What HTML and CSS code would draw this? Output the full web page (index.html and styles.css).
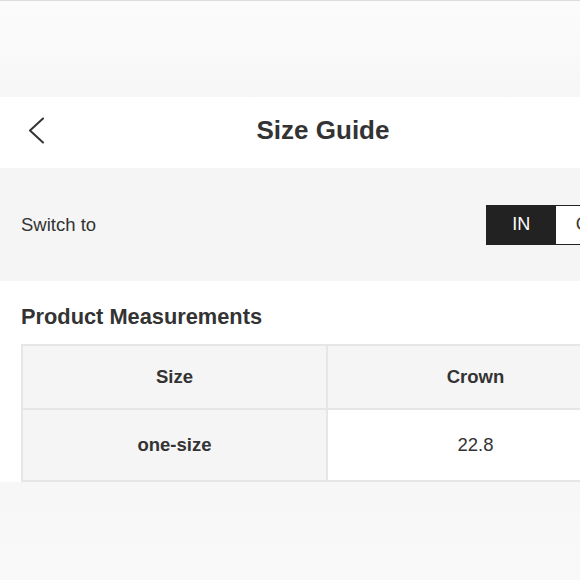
FILE: index.html
```html
<!DOCTYPE html>
<html lang="en">
<head>
<meta charset="utf-8">
<title>Size Guide</title>
<link rel="stylesheet" href="styles.css">
</head>
<body>
<div class="page">
  <div class="topbar"></div>
  <header class="nav">
    <button class="back" aria-label="Back">
      <svg width="16" height="28" viewBox="0 0 16 28"><polyline points="15,1.5 2,13.5 15,25.5" fill="none" stroke="#333" stroke-width="2" stroke-linecap="round" stroke-linejoin="round"/></svg>
    </button>
    <h1 class="title">Size Guide</h1>
    <span></span>
  </header>
  <section class="switch">
    <span class="switch-label">Switch to</span>
    <div class="toggle">
      <span class="opt opt-on">IN</span>
      <span class="opt">CM</span>
    </div>
  </section>
  <section class="measure">
    <h2 class="measure-title">Product Measurements</h2>
    <table class="mtable">
      <tr class="head-row">
        <th class="col-size">Size</th>
        <th>Crown</th>
      </tr>
      <tr class="data-row">
        <th class="col-size">one-size</th>
        <td>22.8</td>
      </tr>
    </table>
  </section>
  <div class="bottom"></div>
</div>
</body>
</html>
```

FILE: styles.css
```css
html, body {
  margin: 0;
  padding: 0;
  height: 100%;
}
body {
  overflow: hidden;
  background: #f8f8f8;
  font-family: "Liberation Sans", Arial, sans-serif;
  color: #333;
}
.page {
  width: 646px;
  height: 580px;
  display: flex;
  flex-direction: column;
}
.topbar {
  height: 96px;
  border-top: 1px solid #dcdcdc;
  background: linear-gradient(180deg, #fbfbfb 0%, #f9f9f9 60%, #f6f6f6 100%);
}
.nav {
  height: 71px;
  background: #fff;
  display: grid;
  grid-template-columns: 1fr auto 1fr;
  align-items: center;
}
.back {
  justify-self: start;
  margin-left: 28px;
  padding: 0;
  border: 0;
  background: none;
  display: flex;
  align-items: center;
  margin-bottom: 4px;
}
.title {
  margin: 0 0 5px;
  font-size: 26px;
  font-weight: 700;
  color: #333;
  line-height: 30px;
}
.switch {
  height: 113px;
  background: #f5f5f5;
  display: flex;
  align-items: center;
  justify-content: space-between;
  padding: 0 21px;
}
.switch-label {
  font-size: 18.5px;
  color: #333;
}
.toggle {
  display: flex;
  height: 40px;
  box-sizing: border-box;
  border: 1px solid #222;
  width: 139px;
}
.opt {
  flex: 1;
  display: flex;
  align-items: center;
  justify-content: center;
  font-size: 18px;
  background: #fff;
  color: #333;
}
.opt-on {
  background: #222;
  color: #fff;
}
.measure {
  background: #fff;
  padding: 23px 21px 0;
}
.measure-title {
  margin: 0 0 14px;
  font-size: 21.8px;
  line-height: 26px;
  font-weight: 700;
  color: #333;
}
.mtable {
  width: 604px;
  border-collapse: collapse;
  border: 2px solid #e6e6e6;
  font-size: 18.5px;
  color: #333;
}
.mtable th, .mtable td {
  border: 2px solid #e6e6e6;
  text-align: center;
  padding: 0;
}
.mtable .col-size {
  width: 303px;
}
.mtable th {
  background: #f5f5f5;
  font-weight: 700;
}
.mtable td {
  background: #fff;
  font-weight: 400;
}
.head-row {
  height: 64px;
}
.data-row {
  height: 72px;
}
.bottom {
  flex: 1;
  background: linear-gradient(180deg, #f7f7f7 0%, #f9f9f9 100%);
}
```
